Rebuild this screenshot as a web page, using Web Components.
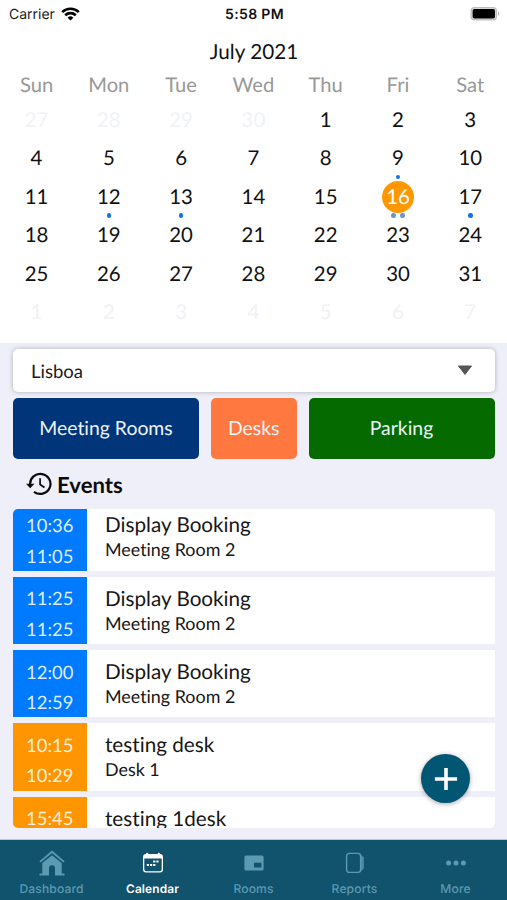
<!DOCTYPE html>
<html lang="en">
<head>
<meta charset="utf-8">
<meta name="viewport" content="width=device-width, initial-scale=1">
<title>Calendar</title>
<style>
html, body { margin: 0; height: 100%; background: #efeff9; overflow: hidden; }
</style>
</head>
<body>
<booking-app></booking-app>
<script>
const define = (name, html, setup) => {
  const template = document.createElement('template');
  template.innerHTML = html;
  customElements.define(name, class extends HTMLElement {
    constructor() {
      super();
      this.attachShadow({ mode: 'open' }).append(template.content.cloneNode(true));
    }
    connectedCallback() { if (setup && !this.ready) { this.ready = true; setup(this, this.shadowRoot); } }
  });
};

define('status-bar', `
<style>
:host { display: grid; grid-template-columns: 1fr auto 1fr; align-items: center; height: 28px; box-sizing: border-box;
  padding: 0 7px 0 9px; font: 400 14px/20px Inter, "Liberation Sans", sans-serif; color: #1c1c1c; }
.left { display: flex; align-items: center; gap: 6px; padding-top: 1px; }
.left svg { margin-top: -2px; }
.time { font-weight: 600; font-size: 14px; letter-spacing: .35px; color: #111; padding-top: 1px; }
.battery { justify-self: end; margin-top: -1px; }
svg { display: block; }
</style>
<div class="left"><span>Carrier</span>
<svg width="19" height="14" viewBox="0 0 19 14" fill="none" stroke="#000" stroke-width="2.6"><path d="M1.2 5.1a11.9 11.9 0 0 1 16.6 0M4.2 8.2a7.7 7.7 0 0 1 10.6 0"/><path d="M9.5 13.6 6.6 10.7a4.2 4.2 0 0 1 5.8 0z" fill="#000" stroke="none"/></svg></div>
<span class="time">5:58 PM</span>
<svg class="battery" width="30" height="16" viewBox="0 0 30 16"><rect x=".5" y="1" width="26.5" height="13.5" rx="4" fill="#bdbdbd"/><rect x="1.7" y="2.2" width="24.1" height="11.1" rx="3" fill="#ddd"/><rect x="2.6" y="3.1" width="22.4" height="9.4" rx="1.8"/><path d="M28 5.6q2.4 2.2 0 4.4z" fill="#aaa"/></svg>
`);

define('calendar-day', `
<style>
:host { display: grid; place-items: center; height: 38.5px; position: relative; font-size: 20.4px; color: #111; }
:host([muted]) { color: #f0f2f6; }
span { display: grid; place-items: center; width: 32px; height: 32px; border-radius: 50%; }
:host([selected]) { color: #fff; }
:host([selected]) span { background: #ff9800; }
.dots { position: absolute; left: 0; right: 0; top: 35.6px; display: flex; justify-content: center; gap: 4.4px; z-index: 1; }
i { width: 4.6px; height: 4.6px; border-radius: 50%; background: #0b74e8; }
:host([selected]) i { background: #6b93cf; }
</style><span><slot></slot></span><div class="dots"></div>
`, (el, root) => {
  for (let i = 0; i < +(el.getAttribute('dots') || 0); i++) root.querySelector('.dots').append(document.createElement('i'));
});

define('month-calendar', `
<style>
:host { display: block; height: 315px; background: #fff; }
h1 { margin: 0; padding: 10px 0 0 1px; font-size: 20.7px; font-weight: 400; line-height: 28px; text-align: center; color: #111; }
.grid { display: grid; grid-template-columns: repeat(7, 1fr); padding: 0 .6px 0 .4px; }
.week { font-size: 20.2px; line-height: 28px; text-align: center; color: #999; padding-top: 5px; height: 34.6px; box-sizing: border-box; }
</style>
<h1>July 2021</h1><div class="grid"></div>
`, (el, root) => {
  const grid = root.querySelector('.grid');
  for (const name of ['Sun', 'Mon', 'Tue', 'Wed', 'Thu', 'Fri', 'Sat']) {
    const head = document.createElement('div');
    head.className = 'week';
    head.textContent = name;
    grid.append(head);
  }
  const dots = { 9: 1, 12: 1, 13: 1, 16: 2, 17: 1 };
  for (let i = 0; i < 42; i++) {
    const day = document.createElement('calendar-day'), date = new Date(2021, 5, 27 + i), n = date.getDate();
    day.textContent = n;
    if (date.getMonth() !== 6) day.setAttribute('muted', '');
    else {
      if (dots[n]) day.setAttribute('dots', dots[n]);
      if (n === 16) day.setAttribute('selected', '');
    }
    grid.append(day);
  }
});

define('location-select', `
<style>
:host { display: flex; align-items: center; justify-content: space-between; height: 43px; box-sizing: border-box; padding: 0 22px 0 18px;
  background: #fff; border-radius: 5px; box-shadow: 0 0 5px rgba(0,0,0,.27); font-size: 18.5px; color: #1a1a1a; }
svg { display: block; margin-top: -1px; }
</style><slot></slot><svg width="16" height="11" viewBox="0 0 16 11"><path d="M1.5 1h13L8 9.4z" fill="#555" stroke="#555" stroke-width="1" stroke-linejoin="round"/></svg>
`);

define('category-button', `
<style>
:host { display: grid; place-items: center; height: 61px; box-sizing: border-box; padding-top: .5px; border-radius: 5px; background: var(--tone); color: #eef3fa; font-size: 19.4px; }
</style><slot></slot>
`);

define('event-item', `
<style>
:host { display: flex; flex: none; height: 67.3px; background: #fff; color: #161616; }
.time { width: 73.5px; background: var(--tone); color: rgba(255,255,255,.88); font-size: 18.4px; text-align: center; line-height: 30.5px; padding-top: 6.6px; box-sizing: border-box; }
.text { padding: 9px 0 0 18.5px; }
.title { font-size: 20.7px; line-height: 26px; }
.place { font-size: 17.9px; line-height: 22px; }
</style>
<div class="time"><slot name="start"></slot><br><slot name="end"></slot></div>
<div class="text"><div class="title"><slot></slot></div><div class="place"><slot name="place"></slot></div></div>
`);

define('events-heading', `
<style>
:host { display: flex; align-items: center; gap: 5px; height: 50px; padding-left: 13px; font-size: 22.1px; font-weight: 700; color: #0b0b0b; }
svg { display: block; }
</style>
<svg width="26" height="24" viewBox="0 0 26 24" fill="none" stroke="#0b0b0b" stroke-width="2.2"><path d="M4.1 12.5A10.2 10 0 1 1 8 19.8"/><path d="M0 11.7h8.4L4.2 16.2z" fill="#0b0b0b" stroke="none"/><path d="M14.1 6.3v6.2l4.4 3" stroke-width="1.7"/></svg><slot></slot>
`);

define('event-list', `
<style>
:host { display: block; height: 319px; overflow: hidden; border-radius: 5px; }
.scroll { display: flex; flex-direction: column; gap: 6px; margin-top: -5.6px; }
</style><div class="scroll"><slot></slot></div>
`);

define('add-button', `
<style>
:host { display: grid; place-items: center; width: 49px; height: 49px; border-radius: 50%; background: #005673; box-shadow: 0 1px 5px rgba(0,0,0,.35); }
</style><svg width="24" height="24" viewBox="0 0 24 24" stroke="#fff" stroke-width="3.6"><path d="M12 .9v22.2M.9 12h22.2"/></svg>
`);

define('tab-item', `
<style>
:host { display: grid; grid-template-rows: 33px 20px; justify-items: center; align-items: center; padding: 6px 0 0; color: #5b9ab1;
  font: 500 12.1px/16px Inter, "Liberation Sans", sans-serif; letter-spacing: .12px; }
:host([active]) { color: #fff; font-weight: 600; font-size: 11.9px; }
::slotted(svg) { display: block; }
</style><slot name="icon"></slot><span><slot></slot></span>
`);

define('tab-bar', `
<style>
:host { display: grid; grid-template-columns: repeat(5, 101px); padding-left: 1px; height: 60px; background: #11536d; box-shadow: 0 -1px 0 #a9cfdd; }
</style>
<tab-item><svg slot="icon" width="26" height="26" viewBox="0 0 26 26" fill="currentColor"><path d="M.4 11.2 13 .6l12.6 10.6-1.2 1.2L13 3 1.6 12.4z"/><path d="M13 5.2 22.7 13v10.5h2.8v1.9H16v-7.2a3 3 0 0 0-6 0v7.2H.5v-1.9h2.8V13z"/></svg>Dashboard</tab-item>
<tab-item active><svg slot="icon" width="22" height="22" viewBox="0 0 22 22" fill="currentColor"><path d="M4.2 1.1q1-.9 2 0v.8h9.6v-.8q1-.9 2 0v.8h.2q3 0 3 3V17.6q0 3-3 3H4q-3 0-3-3V4.9q0-3 3-3zM2.3 6.5V17.2q0 2.1 2.1 2.1h13.2q2.1 0 2.1-2.1V6.5z" fill-rule="evenodd"/><path d="M4.8 12h2.2v2H4.8zm3.2 0h2.2v2H8zm3.2 0h2.2v2h-2.2zm0-3.6h2.2v2h-2.2zm3.2 0h2.2v2h-2.2z"/></svg>Calendar</tab-item>
<tab-item><svg slot="icon" width="20" height="16" viewBox="0 0 20 16" fill="currentColor" fill-rule="evenodd"><path d="M2 .5h16q1.6 0 1.6 1.6v11.8q0 1.6-1.6 1.6H2Q.4 15.5.4 13.9V2.1Q.4.5 2 .5zM10 7.8v4.6h7.4V7.8z"/></svg>Rooms</tab-item>
<tab-item><svg slot="icon" width="20" height="22" viewBox="0 0 20 22" fill="none" stroke="currentColor" stroke-width="1.4"><rect x="1.6" y="1.4" width="14" height="19" rx="2.6"/><path d="M16 3.2 18.6 5.3V16.5L16 19z" fill="currentColor" stroke-width=".6" opacity=".8"/></svg>Reports</tab-item>
<tab-item><svg slot="icon" width="20" height="6" viewBox="0 0 20 6" fill="currentColor"><circle cx="2.6" cy="3" r="2.5"/><circle cx="10" cy="3" r="2.5"/><circle cx="17.4" cy="3" r="2.5"/></svg>More</tab-item>
`);

define('booking-app', `
<style>
:host { display: flex; flex-direction: column; width: 507px; height: 900px; position: relative; background: #efeff9; font-family: Lato, "Liberation Sans", sans-serif; font-variant-ligatures: none; text-rendering: geometricPrecision; }
status-bar { background: #fff; }
main { flex: 1; padding: 6px 12.5px 0 13px; }
.buttons { display: grid; grid-template-columns: 186px 86px 186px; justify-content: space-between; margin-top: 6px; }
add-button { position: absolute; left: 421px; top: 754px; }
</style>
<status-bar></status-bar>
<month-calendar></month-calendar>
<main>
<location-select>Lisboa</location-select>
<div class="buttons">
<category-button style="--tone:#003679">Meeting Rooms</category-button>
<category-button style="--tone:#ff7840">Desks</category-button>
<category-button style="--tone:#056b00">Parking</category-button>
</div>
<events-heading>Events</events-heading>
<event-list>
<event-item style="--tone:#007aff"><span slot="start">10:36</span><span slot="end">11:05</span>Display Booking<span slot="place">Meeting Room 2</span></event-item>
<event-item style="--tone:#007aff"><span slot="start">11:25</span><span slot="end">11:25</span>Display Booking<span slot="place">Meeting Room 2</span></event-item>
<event-item style="--tone:#007aff"><span slot="start">12:00</span><span slot="end">12:59</span>Display Booking<span slot="place">Meeting Room 2</span></event-item>
<event-item style="--tone:#ff9500"><span slot="start">10:15</span><span slot="end">10:29</span>testing desk<span slot="place">Desk 1</span></event-item>
<event-item style="--tone:#ff9500"><span slot="start">15:45</span><span slot="end"></span>testing 1desk<span slot="place"></span></event-item>
</event-list>
</main>
<tab-bar></tab-bar>
<add-button></add-button>
`);
</script>
</body>
</html>
